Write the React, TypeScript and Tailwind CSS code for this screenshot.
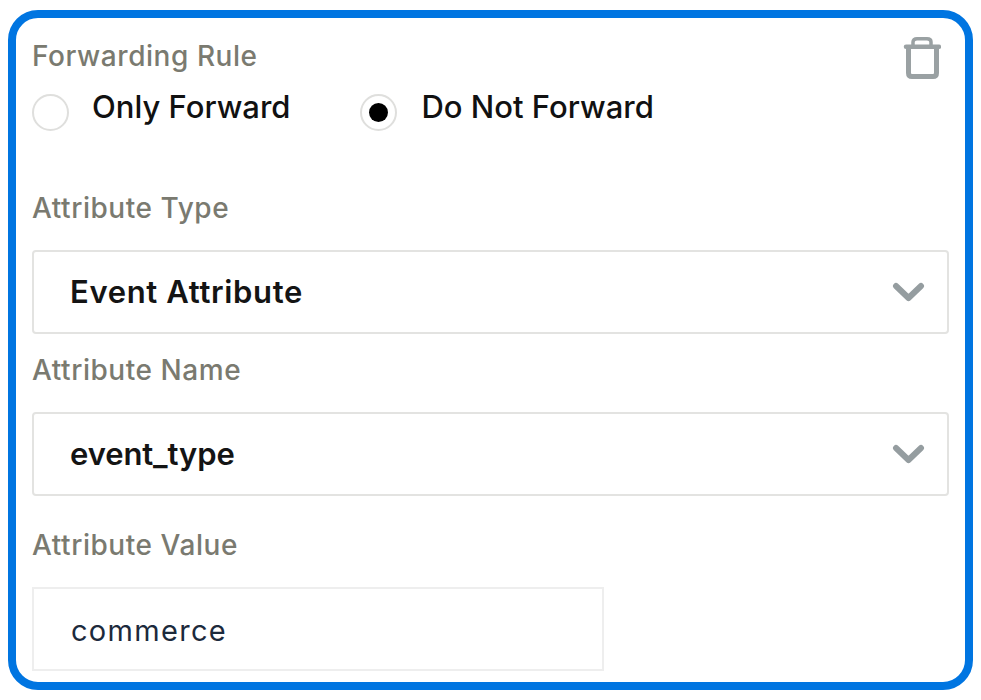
const font = "font-['Inter','Liberation_Sans',sans-serif]";

function Chevron() {
  return (
    <svg width="34" height="22" viewBox="0 0 34 22" fill="none" className="shrink-0">
      <path d="M5 5 L17.5 17 L30 5" stroke="#959da0" strokeWidth="6" strokeLinecap="round" strokeLinejoin="round" />
    </svg>
  );
}

function Trash() {
  return (
    <svg width="38" height="44" viewBox="0 0 38 44" fill="none">
      <path d="M10 9 V6 Q10 2.7 14 2.7 H24 Q28 2.7 28 6 V9" stroke="#9aa1a3" strokeWidth="3.5" />
      <path d="M3 10.7 H36" stroke="#9aa1a3" strokeWidth="4.5" strokeLinecap="round" />
      <path d="M5.5 13 V37 Q5.5 40.5 9 40.5 H30 Q33.5 40.5 33.5 37 V13" stroke="#9aa1a3" strokeWidth="5" />
    </svg>
  );
}

function Radio({ label, checked, labelClass }: { label: string; checked?: boolean; labelClass: string }) {
  return (
    <div className="flex items-start">
      <div className="mt-[18px] flex h-[37px] w-[37px] items-center justify-center rounded-full border-2 border-[#dfdfdd] bg-white">
        {checked && <div className="h-[19px] w-[19px] rounded-full bg-black" />}
      </div>
      <span className={`mt-[12px] text-[31px] font-medium leading-[38px] tracking-[0px] text-[#111111] ${labelClass}`}>{label}</span>
    </div>
  );
}

function SelectBox({ value, textClass }: { value: string; textClass: string }) {
  return (
    <div className="flex h-[84px] w-[917px] items-center justify-between rounded-[4px] border-2 border-[#e3e3e1] pl-[36px] pr-[22px]">
      <span className={`text-[31px] font-semibold text-[#141414] ${textClass}`}>{value}</span>
      <Chevron />
    </div>
  );
}

function FieldLabel({ children }: { children: string }) {
  return <div className="text-[28px] font-medium leading-[40px] tracking-[0.55px] text-[#7a7a70]">{children}</div>;
}

export default function App() {
  return (
    <div className={`min-h-[700px] bg-white pl-[8px] pt-[10px] ${font}`}>
      <div className="relative h-[680px] w-[965px] rounded-[30px] border-[8px] border-[#0075e1] bg-white pl-[16px] pt-[18px]">
        <div className="absolute right-[24px] top-[18px]">
          <Trash />
        </div>
        <FieldLabel>Forwarding Rule</FieldLabel>
        <div className="flex gap-[69px]">
          <Radio label="Only Forward" labelClass="ml-[23px]" />
          <Radio label="Do Not Forward" checked labelClass="ml-[25px]" />
        </div>
        <div className="mt-[57px]">
          <FieldLabel>Attribute Type</FieldLabel>
        </div>
        <div className="mt-[22px]">
          <SelectBox value="Event Attribute" textClass="tracking-[0.65px]" />
        </div>
        <div className="mt-[16px]">
          <FieldLabel>Attribute Name</FieldLabel>
        </div>
        <div className="mt-[22px]">
          <SelectBox value="event_type" textClass="tracking-[-0.1px]" />
        </div>
        <div className="mt-[29px]">
          <FieldLabel>Attribute Value</FieldLabel>
        </div>
        <div className="mt-[22px] flex h-[84px] w-[572px] items-center border-2 border-[#eeeeee] pl-[37px] pt-[4px]">
          <span className="text-[29px] tracking-[1.3px] text-[#1c2a3c]">commerce</span>
        </div>
      </div>
    </div>
  );
}
